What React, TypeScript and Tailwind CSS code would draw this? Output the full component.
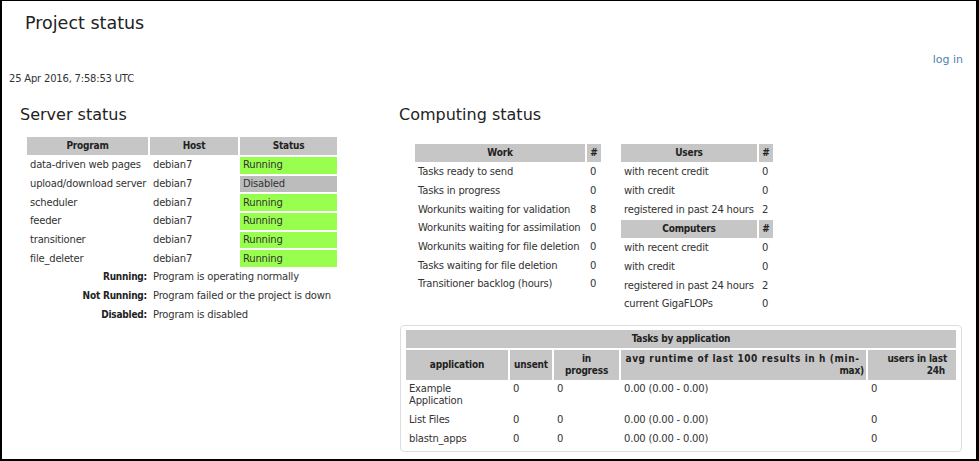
import React from "react";

const F = { fontFamily: '"DejaVu Sans", sans-serif' };
const B = { fontFamily: '"DejaVu Sans Condensed", "DejaVu Sans", sans-serif' };

const serverRows: [string, string, boolean][] = [
  ["data-driven web pages", "debian7", true],
  ["upload/download server", "debian7", false],
  ["scheduler", "debian7", true],
  ["feeder", "debian7", true],
  ["transitioner", "debian7", true],
  ["file_deleter", "debian7", true],
];

const workRows: [string, string][] = [
  ["Tasks ready to send", "0"],
  ["Tasks in progress", "0"],
  ["Workunits waiting for validation", "8"],
  ["Workunits waiting for assimilation", "0"],
  ["Workunits waiting for file deletion", "0"],
  ["Tasks waiting for file deletion", "0"],
  ["Transitioner backlog (hours)", "0"],
];

const th = "bg-[#c6c6c6] font-bold text-center h-[18px] p-0 leading-[18px] text-[#222]";
const td = "h-[16.7px] p-0 pl-[3px] leading-[16px] whitespace-nowrap";
const hh = "bg-[#c6c6c6] font-bold p-0 leading-[12px] h-[30px] text-[#222]";
const td1 = "p-0 pl-[3px] pt-[1px] pb-[3px] leading-[12px] align-top";

export default function App() {
  return (
    <div
      className="w-[979px] h-[461px] bg-white text-[#333] border-l-2 border-t border-r-[3px] border-b-2 border-black overflow-hidden text-[10px] tracking-[-0.2px]"
      style={F}
    >
      <div className="h-[49px] pl-[23px] pt-[9px] text-[17.5px] leading-[26px] text-[#222] tracking-normal">
        Project status
      </div>
      <div className="h-[20px] text-right pr-[13px] text-[#4f7fae] text-[11px] leading-[20px] tracking-normal">log in</div>
      <div className="h-[16px] pl-[7px] leading-[18px]">25 Apr 2016, 7:58:53 UTC</div>
      <div className="flex">
        <div className="w-[397px] pl-[18px]">
          <div className="h-[47px] pt-[18px] text-[16px] leading-[22px] text-[#222] tracking-normal">
            Server status
          </div>
          <table className="border-separate border-spacing-[2px] ml-[5px] mt-[2px]">
            <tbody>
              <tr style={B}>
                <th className={`${th} w-[121px]`}>Program</th>
                <th className={`${th} w-[88px]`}>Host</th>
                <th className={`${th} w-[97px]`}>Status</th>
              </tr>
              {serverRows.map(([p, h, ok]) => (
                <tr key={p}>
                  <td className={td}>{p}</td>
                  <td className={td}>{h}</td>
                  <td className={`${td} ${ok ? "bg-[#99ff4f]" : "bg-[#bcbcbc]"}`}>{ok ? "Running" : "Disabled"}</td>
                </tr>
              ))}
              {[
                ["Running:", "Program is operating normally"],
                ["Not Running:", "Program failed or the project is down"],
                ["Disabled:", "Program is disabled"],
              ].map(([a, b]) => (
                <tr key={a}>
                  <td className={`${td} text-right font-bold pr-[1px] text-[#222]`} style={B}>{a}</td>
                  <td className={td} colSpan={2}>{b}</td>
                </tr>
              ))}
            </tbody>
          </table>
        </div>
        <div className="flex-1">
          <div className="h-[47px] pt-[18px] text-[16px] leading-[22px] text-[#222] tracking-normal">
            Computing status
          </div>
          <div className="flex pl-[14px] mt-[9px] gap-[16px] items-start">
            <table className="border-separate border-spacing-[2px]">
              <tbody>
                <tr style={B}>
                  <th className={`${th} w-[170px]`}>Work</th>
                  <th className={`${th} w-[14px]`}>#</th>
                </tr>
                {workRows.map(([a, b]) => (
                  <tr key={a}>
                    <td className={td}>{a}</td>
                    <td className={td}>{b}</td>
                  </tr>
                ))}
              </tbody>
            </table>
            <table className="border-separate border-spacing-[2px]">
              <tbody>
                <tr style={B}>
                  <th className={`${th} w-[136px]`}>Users</th>
                  <th className={`${th} w-[14px]`}>#</th>
                </tr>
                {[
                  ["with recent credit", "0"],
                  ["with credit", "0"],
                  ["registered in past 24 hours", "2"],
                ].map(([a, b]) => (
                  <tr key={a}>
                    <td className={td}>{a}</td>
                    <td className={td}>{b}</td>
                  </tr>
                ))}
                <tr style={B}>
                  <th className={th}>Computers</th>
                  <th className={th}>#</th>
                </tr>
                {[
                  ["with recent credit", "0"],
                  ["with credit", "0"],
                  ["registered in past 24 hours", "2"],
                  ["current GigaFLOPs", "0"],
                ].map(([a, b]) => (
                  <tr key={a + "c"}>
                    <td className={td}>{a}</td>
                    <td className={td}>{b}</td>
                  </tr>
                ))}
              </tbody>
            </table>
          </div>
          <div className="mt-[10px] ml-[1px] w-[562px] border border-[#ddd] rounded-[4px] px-[3px] pt-[2px] pb-[2px]">
            <table className="border-separate border-spacing-[2px] w-full table-fixed">
              <colgroup>
                <col className="w-[102px]" />
                <col className="w-[42px]" />
                <col className="w-[65px]" />
                <col className="w-[245px]" />
                <col />
              </colgroup>
              <tbody>
                <tr style={B}>
                  <th className={`${th} h-[17px] leading-[17px]`} colSpan={5}>Tasks by application</th>
                </tr>
                <tr style={B}>
                  <th className={`${hh} text-center`}>application</th>
                  <th className={`${hh} text-center`}>unsent</th>
                  <th className={`${hh} text-center`}>in<br />progress</th>
                  <th className={`${hh} text-right pr-[2px]`}>
                    <div className="text-center tracking-[0.6px] whitespace-nowrap">avg runtime of last 100 results in h (min-</div>
                    <div>max)</div>
                  </th>
                  <th className={`${hh} text-right pr-[9px]`}>
                    <div>users in last</div>
                    <div className="pr-[2px]">24h</div>
                  </th>
                </tr>
                <tr>
                  <td className={td1}>Example<br />Application</td>
                  <td className={td1}>0</td>
                  <td className={td1}>0</td>
                  <td className={td1}>0.00 (0.00 - 0.00)</td>
                  <td className={td1}>0</td>
                </tr>
                {["List Files", "blastn_apps"].map((a) => (
                  <tr key={a}>
                    <td className={td}>{a}</td>
                    <td className={td}>0</td>
                    <td className={td}>0</td>
                    <td className={td}>0.00 (0.00 - 0.00)</td>
                    <td className={td}>0</td>
                  </tr>
                ))}
              </tbody>
            </table>
          </div>
        </div>
      </div>
    </div>
  );
}
